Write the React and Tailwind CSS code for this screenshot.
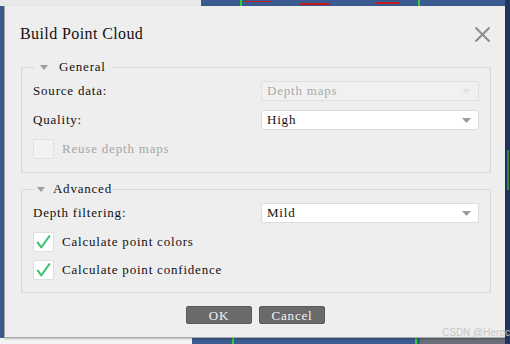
import React from "react";

function Arrow({ color = "#9a9a9a" }) {
  return (
    <svg width="9" height="5" viewBox="0 0 9 5">
      <path d="M0 0H9L4.5 5Z" fill={color} />
    </svg>
  );
}

function Combo({ value, disabled }) {
  return (
    <div
      className={
        disabled
          ? "h-[20px] flex items-center justify-between pl-[5px] pr-[7px] rounded-[2px] border border-[#e0e0e0] bg-[#f1f1f1] text-[#a9a9a9]"
          : "h-[20px] flex items-center justify-between pl-[5px] pr-[7px] rounded-[2px] border border-[#dcdcdc] bg-white text-[#111]"
      }
    >
      <span>{value}</span>
      <Arrow color={disabled ? "#e2e2e2" : "#9a9a9a"} />
    </div>
  );
}

function Check({ checked, disabled, label }) {
  return (
    <div className="h-[20px] flex items-center gap-[8px]">
      <div
        className={
          disabled
            ? "w-[21px] h-[20px] rounded-[2px] border border-[#e0e0e0] bg-[#f2f2f2]"
            : "w-[21px] h-[20px] rounded-[2px] border border-[#dedede] bg-white flex items-center justify-center"
        }
      >
        {checked && (
          <svg width="21" height="20" viewBox="0 0 21 20">
            <path d="M4 10.5L8 16L17 3.5" fill="none" stroke="#3fc071" strokeWidth="2.2" strokeLinecap="round" strokeLinejoin="round" />
          </svg>
        )}
      </div>
      <span className={disabled ? "text-[#a6a6a6]" : "text-[#111]"}>{label}</span>
    </div>
  );
}

function Group({ title, children, pb }) {
  return (
    <div className={"ml-[16px] w-[470px] border border-[#d7d7d7] rounded-[2px] px-[11px] " + pb}>
      <div className="-mt-[9px] ml-[1px] h-[16px] w-[78px] bg-[#eeeeee] flex items-center">
        <div className="w-[20px] flex justify-center">
          <svg width="8" height="5" viewBox="0 0 8 5">
            <path d="M0 0H8L4 5Z" fill="#9d9d9d" />
          </svg>
        </div>
        <span className="ml-[5px] text-[#111]">{title}</span>
      </div>
      {children}
    </div>
  );
}

export default function App() {
  return (
    <div className="relative w-[510px] h-[344px] overflow-hidden bg-[#3a5b8f] font-['Liberation_Serif',serif] text-[13px] tracking-[0.8px]">
      {/* background desktop bits */}
      <div className="absolute left-0 top-0 w-[201px] h-[6px] bg-[#e9e9e9]" />
      <div className="absolute left-[240px] top-0 w-[2px] h-[6px] bg-[#2fd13a]" />
      <div className="absolute left-[418px] top-0 w-[2px] h-[6px] bg-[#2fd13a]" />
      <div className="absolute left-[243px] top-[1px] w-[28px] h-[1px] bg-[#c81a1a]" />
      <div className="absolute left-[300px] top-[3px] w-[30px] h-[2px] bg-[#c81a1a]" />
      <div className="absolute left-[376px] top-[2px] w-[24px] h-[2px] bg-[#c81a1a]" />
      <div className="absolute right-0 top-0 w-[5px] h-[344px] bg-[#1f3560]" />
      <div className="absolute right-[1px] top-[150px] w-[2px] h-[40px] bg-[#2a8a40]" />
      <div className="absolute left-0 bottom-0 w-[192px] h-[6px] bg-[#f3f3f3]" />
      <div className="absolute left-[232px] bottom-0 w-[2px] h-[6px] bg-[#2fd13a]" />
      <div className="absolute left-[415px] bottom-0 w-[2px] h-[6px] bg-[#2fd13a]" />
      <div className="absolute left-[420px] bottom-0 w-[85px] h-[6px] bg-[#6a6e78]" />

      {/* dialog */}
      <div className="absolute left-[4px] top-[6px] w-[501px] h-[332px] bg-[#eeeeee] border-l border-b border-[#a9a9a9] shadow-[0_1px_2px_rgba(0,0,0,0.25)] flex flex-col">
        <div className="h-[56px] flex items-center justify-between pl-[15px] pr-[14px]">
          <span className="text-[16px] tracking-[0.4px] text-[#111]">Build Point Cloud</span>
          <svg width="17" height="17" viewBox="0 0 17 17">
            <path d="M1.5 1.5L15.5 15.5M15.5 1.5L1.5 15.5" stroke="#8c8c8c" strokeWidth="2" />
          </svg>
        </div>

        <div className="mt-[5px]">
          <Group title="General" pb="pb-[13px]">
            <div className="mt-[6px] flex flex-col gap-[9px]">
              <div className="grid grid-cols-[228px_1fr] items-center">
                <span className="text-[#111]">Source data:</span>
                <Combo value="Depth maps" disabled />
              </div>
              <div className="grid grid-cols-[228px_1fr] items-center">
                <span className="text-[#111]">Quality:</span>
                <Combo value="High" />
              </div>
              <Check disabled label="Reuse depth maps" />
            </div>
          </Group>
        </div>

        <div className="mt-[16px]">
          <Group title="Advanced" pb="pb-[12px]">
            <div className="mt-[6px] flex flex-col gap-[8.5px]">
              <div className="grid grid-cols-[228px_1fr] items-center">
                <span className="text-[#111]">Depth filtering:</span>
                <Combo value="Mild" />
              </div>
              <Check checked label="Calculate point colors" />
              <Check checked label="Calculate point confidence" />
            </div>
          </Group>
        </div>

        <div className="mt-[13px] flex justify-center gap-[7px] pl-[1px]">
          <button className="w-[66px] h-[18px] rounded-[2px] bg-[#6a6a6a] border border-[#5a5a5a] text-[#f4f4f4] text-[13px] leading-none flex items-center justify-center">OK</button>
          <button className="w-[66px] h-[18px] rounded-[2px] bg-[#6a6a6a] border border-[#5a5a5a] text-[#f4f4f4] text-[13px] leading-none flex items-center justify-center">Cancel</button>
        </div>
      </div>

      <div className="absolute left-[442px] top-[325px] font-['Liberation_Sans',sans-serif] text-[10px] tracking-normal text-[#c6c6c6] whitespace-nowrap">
        CSDN @Herpc
      </div>
    </div>
  );
}
